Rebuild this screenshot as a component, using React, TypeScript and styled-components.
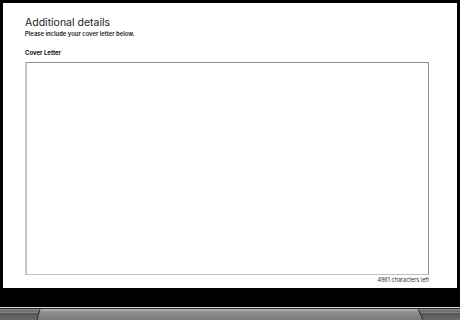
import styled, { createGlobalStyle } from "styled-components";

const GlobalStyle = createGlobalStyle`
  html, body {
    margin: 0;
    padding: 0;
    background: #000;
  }
  body {
    font-family: "Inter", "Noto Sans", sans-serif;
  }
`;

const Laptop = styled.div`
  width: 460px;
  height: 320px;
  background: #000;
  display: flex;
  flex-direction: column;
  overflow: hidden;
`;

const Screen = styled.main`
  margin: 3px 3px 0 3px;
  height: 285px;
  background: #fff;
  padding: 14px 28px 0 22px;
  box-sizing: border-box;
  display: flex;
  flex-direction: column;
`;

const Title = styled.h1`
  margin: 0;
  font-size: 10.5px;
  font-weight: 400;
  color: #1c1c1c;
  line-height: 12px;
`;

const Subtitle = styled.p`
  margin: 1px 0 0;
  font-size: 5.9px;
  font-weight: 600;
  color: #1a1a1a;
  line-height: 8px;
`;

const Label = styled.label`
  margin-top: 11px;
  font-size: 6px;
  font-weight: 700;
  color: #111;
  line-height: 8px;
`;

const TextArea = styled.textarea`
  margin-top: 5px;
  height: 213px;
  box-sizing: border-box;
  border: 1px solid #7f9b8d;
  border-left: 2px solid #b7cbc3;
  border-bottom-color: #b3c4bd;
  background: #fff;
  resize: none;
  outline: none;
  padding: 0;
`;

const Counter = styled.div`
  margin-top: 2px;
  text-align: right;
  font-size: 5.5px;
  color: #333;
  line-height: 7px;
`;

const Gap = styled.div`
  height: 19px;
`;

const Base = styled.svg`
  display: block;
  width: 460px;
  height: 13px;
`;

export default function App() {
  return (
    <>
      <GlobalStyle />
      <Laptop>
        <Screen>
          <Title>Additional details</Title>
          <Subtitle>Please include your cover letter below.</Subtitle>
          <Label htmlFor="cover">Cover Letter</Label>
          <TextArea id="cover" />
          <Counter>4961 characters left</Counter>
        </Screen>
        <Gap />
        <Base viewBox="0 0 460 13">
          <defs>
            <linearGradient id="mid" x1="0" y1="0" x2="0" y2="1">
              <stop offset="0" stopColor="#b5b5b5" />
              <stop offset="0.3" stopColor="#8d8d8d" />
              <stop offset="1" stopColor="#7a7a7a" />
            </linearGradient>
            <linearGradient id="side" x1="0" y1="0" x2="0" y2="1">
              <stop offset="0" stopColor="#8a8a8a" />
              <stop offset="0.4" stopColor="#555" />
              <stop offset="1" stopColor="#6a6a6a" />
            </linearGradient>
          </defs>
          <rect x="0" y="0" width="460" height="1" fill="#d8d8d8" />
          <rect x="0" y="1" width="460" height="1" fill="#2a2a2a" />
          <rect x="0" y="2" width="460" height="11" fill="url(#mid)" />
          <polygon points="0,2 40,2 37,13 0,13" fill="url(#side)" />
          <polygon points="418,2 460,2 460,13 423,13" fill="url(#side)" />
          <line x1="40" y1="2" x2="37" y2="13" stroke="#222" strokeWidth="0.8" />
          <line x1="418" y1="2" x2="423" y2="13" stroke="#222" strokeWidth="0.8" />
          <rect x="0" y="5" width="38" height="0.6" fill="#9a9a9a" />
          <rect x="421" y="5" width="39" height="0.6" fill="#9a9a9a" />
        </Base>
      </Laptop>
    </>
  );
}
